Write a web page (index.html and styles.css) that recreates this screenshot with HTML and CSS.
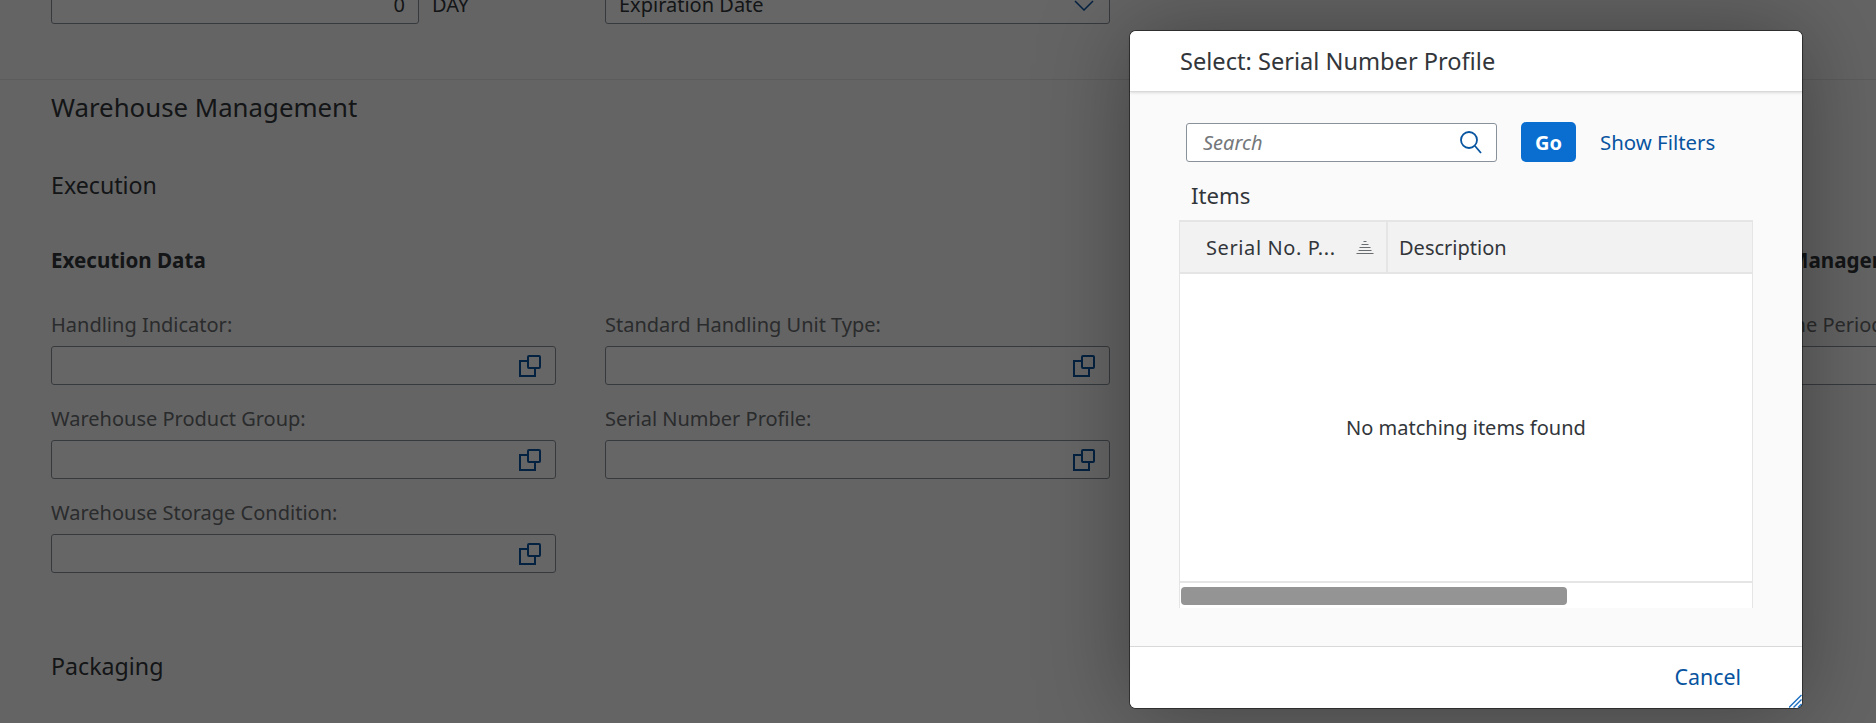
FILE: index.html
```html
<!DOCTYPE html>
<html lang="en">
<head>
<meta charset="utf-8">
<title>Select: Serial Number Profile</title>
<link rel="stylesheet" href="styles.css">
</head>
<body>
<div class="page">
  <div class="top-row">
    <div class="field qty"><span class="qty-value">0</span></div>
    <span class="unit">DAY</span>
    <div class="field select"><span class="select-value">Expiration Date</span>
      <svg class="chevron" viewBox="0 0 20 11"><path d="M1 1l9 9 9-9"/></svg>
    </div>
  </div>
  <section class="section">
    <h2 class="section-title">Warehouse Management</h2>
    <h3 class="sub-title">Execution</h3>
    <div class="columns">
      <div class="group">
        <h4 class="group-title">Execution Data</h4>
        <div class="form-grid">
          <div class="form-item"><label class="label">Handling Indicator:</label>
            <div class="field vh"><svg class="vh-icon" viewBox="0 0 22 22"><path d="M9 6H1v15h15v-8"/><rect x="9" y="1" width="12" height="12" rx="1"/></svg></div></div>
          <div class="form-item"><label class="label">Standard Handling Unit Type:</label>
            <div class="field vh"><svg class="vh-icon" viewBox="0 0 22 22"><path d="M9 6H1v15h15v-8"/><rect x="9" y="1" width="12" height="12" rx="1"/></svg></div></div>
          <div class="form-item"><label class="label">Warehouse Product Group:</label>
            <div class="field vh"><svg class="vh-icon" viewBox="0 0 22 22"><path d="M9 6H1v15h15v-8"/><rect x="9" y="1" width="12" height="12" rx="1"/></svg></div></div>
          <div class="form-item"><label class="label">Serial Number Profile:</label>
            <div class="field vh"><svg class="vh-icon" viewBox="0 0 22 22"><path d="M9 6H1v15h15v-8"/><rect x="9" y="1" width="12" height="12" rx="1"/></svg></div></div>
          <div class="form-item"><label class="label">Warehouse Storage Condition:</label>
            <div class="field vh"><svg class="vh-icon" viewBox="0 0 22 22"><path d="M9 6H1v15h15v-8"/><rect x="9" y="1" width="12" height="12" rx="1"/></svg></div></div>
        </div>
      </div>
      <div class="group side">
        <h4 class="group-title side-title">Management</h4>
        <div class="form-item"><label class="label">Time Period:</label>
          <div class="field side-field"></div></div>
      </div>
    </div>
    <h3 class="sub-title packaging">Packaging</h3>
  </section>

  <div class="overlay"></div>

  <div class="dialog" role="dialog">
    <header class="dialog-head">Select: Serial Number Profile</header>
    <div class="dialog-body">
      <div class="toolbar">
        <div class="search"><span class="search-ph">Search</span>
          <svg class="search-icon" viewBox="0 0 22 23"><circle cx="9" cy="9" r="8"/><path d="M15 15l6 7"/></svg>
        </div>
        <button class="go">Go</button>
        <a class="link filters">Show Filters</a>
      </div>
      <div class="items-title">Items</div>
      <div class="table">
        <div class="thead">
          <div class="th th-first"><span class="th-text">Serial No. P...</span>
            <svg class="sort-icon" viewBox="0 0 18 13"><path d="M7.5 .5h3M5.5 3.5h7M3.5 6.5h11M2.5 9.5h13M.5 12.5h17"/></svg>
          </div>
          <div class="th th-desc">Description</div>
        </div>
        <div class="tbody">No matching items found</div>
        <div class="scroll-row"><div class="scroll-thumb"></div></div>
      </div>
    </div>
    <footer class="dialog-foot"><a class="link cancel">Cancel</a></footer>
    <svg class="resize" viewBox="0 0 13 14"><path d="M0 13.5L12.5 1M4.5 13.5L12.5 5.5M9 13.5L12.5 10"/></svg>
  </div>
</div>
</body>
</html>
```
FILE: styles.css
```css
* { box-sizing: border-box; }
html, body { margin: 0; padding: 0; height: 100%; overflow: hidden; }
body { font-family: "Noto Sans", "Open Sans", sans-serif; color: #32363a; background: #fafafa; }
.page { position: relative; width: 1876px; height: 723px; overflow: hidden; background: #fafafa; }

.top-row { display: flex; align-items: center; padding-left: 51px; margin-top: -15px; height: 39px; }
.field { display: flex; align-items: center; height: 39px; background: #fff; border: 1px solid #89919a; border-radius: 3px; }
.qty { width: 368px; flex: none; justify-content: flex-end; padding-right: 13px; margin-right: 13px; font-size: 20px; }
.unit { width: 173px; flex: none; font-size: 20px; }
.select { width: 505px; flex: none; justify-content: space-between; padding: 0 15px 0 13px; font-size: 20px; }
.chevron { width: 20px; height: 11px; fill: none; stroke: #0854a0; stroke-width: 1.5; margin-top: 2px; }

.section { margin-top: 55px; border-top: 1px solid #e5e5e5; padding-left: 51px; }
.section-title { margin: 0; padding-top: 9px; font-size: 25.8px; line-height: 36px; font-weight: 400; }
.sub-title { margin: 45px 0 0; font-size: 23.2px; line-height: 30px; font-weight: 400; }
.columns { display: flex; margin-top: 47px; }
.group { width: 1720px; flex: none; }
.group-title { margin: 0; font-size: 20.6px; line-height: 26px; font-weight: 700; white-space: nowrap; }
.form-grid { display: grid; grid-template-columns: 505px 505px; column-gap: 49px; width: 1059px; margin-top: 39px; }
.form-item { height: 94px; }
.label { display: block; font-size: 20px; line-height: 26px; height: 34px; color: #6a6d70; white-space: nowrap; }
.vh { justify-content: flex-end; padding-right: 14px; }
.vh-icon { width: 22px; height: 22px; fill: none; stroke: #0854a0; stroke-width: 2; }
.side { width: 200px; }
.side-title { padding-left: 18px; }
.side .form-item { margin-top: 39px; }
.side-field { border-right: 0; border-radius: 3px 0 0 3px; width: 200px; }
.packaging { margin-top: 57px; }

.overlay { position: absolute; inset: 0; background: rgba(0, 0, 0, .6); }

.dialog { position: absolute; left: 1130px; top: 31px; width: 672px; height: 677px; display: flex; flex-direction: column; background: #fff; border-radius: 6px; box-shadow: 0 0 0 1px rgba(0, 0, 0, .45), 0 2px 90px rgba(0, 0, 0, .35); }
.dialog-head { flex: none; height: 61px; padding-left: 50px; font-size: 23.6px; line-height: 61px; background: #fff; border-radius: 6px 6px 0 0; border-bottom: 1px solid #d9d9d9; box-shadow: 0 1px 3px rgba(0, 0, 0, .12); position: relative; white-space: nowrap; }
.dialog-body { flex: 1; background: #fafafa; padding: 30px 49px 0; border-bottom: 1px solid #d9d9d9; }
.toolbar { display: flex; align-items: center; height: 40px; padding-left: 7px; }
.search { display: flex; align-items: center; justify-content: space-between; width: 311px; height: 39px; margin-top: 1px; background: #fff; border: 1px solid #89919a; border-radius: 3px; padding: 0 14px 0 16px; }
.search-ph { font-size: 20px; font-style: italic; color: #74777a; }
.search-icon { width: 22px; height: 23px; fill: none; stroke: #0854a0; stroke-width: 1.8; }
.go { width: 55px; height: 40px; margin-left: 24px; padding: 0; border: 0; border-radius: 5px; background: #0a6ed1; color: #fff; font: 700 20px "Noto Sans", sans-serif; }
.link { color: #0854a0; font-size: 20.4px; }
.filters { margin-left: 24px; }
.items-title { margin: 19px 0 0 12px; font-size: 22.2px; line-height: 30px; }
.table { margin-top: 9px; width: 574px; border-top: 2px solid #e5e5e5; border-left: 1px solid #e5e5e5; border-right: 1px solid #e5e5e5; }
.thead { display: flex; height: 52px; background: #f2f2f2; border-bottom: 2px solid #e5e5e5; }
.th { display: flex; align-items: center; font-size: 20px; }
.th-first { width: 208px; padding: 0 12px 0 26px; justify-content: space-between; border-right: 2px solid #e5e5e5; }
.th-text { letter-spacing: .6px; white-space: nowrap; }
.th-desc { padding-left: 11px; }
.sort-icon { width: 18px; height: 13px; fill: none; stroke: #6a6d70; stroke-width: 1; }
.tbody { display: flex; align-items: center; justify-content: center; height: 309px; background: #fff; border-bottom: 2px solid #e5e5e5; font-size: 20px; }
.scroll-row { height: 25px; background: #fff; padding: 4px 0 0 1px; }
.scroll-thumb { width: 386px; height: 18px; background: #949494; border-radius: 4px; }
.dialog-foot { flex: none; height: 61px; display: flex; align-items: center; justify-content: flex-end; padding: 0 61px 3px 0; background: #fff; border-radius: 0 0 6px 6px; }
.cancel { font-size: 21.4px; }
.resize { position: absolute; right: 0; bottom: 0; width: 13px; height: 14px; fill: none; stroke: #1d6fc0; stroke-width: 1.4; }
```
